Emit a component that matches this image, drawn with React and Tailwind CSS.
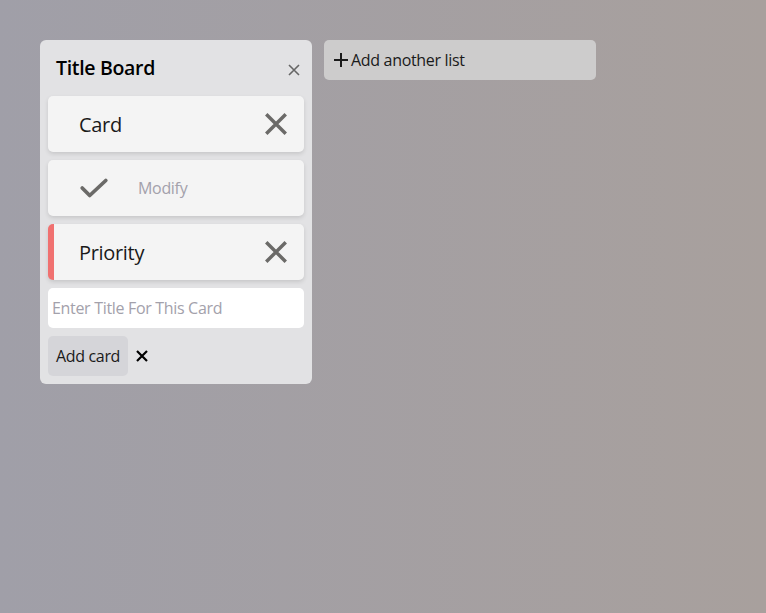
import React from "react";

const XIcon = ({ className }) => (
  <svg viewBox="0 0 24 24" className={className} fill="none" stroke="currentColor" strokeWidth="3.2" strokeLinecap="butt">
    <path d="M3 3L21 21M21 3L3 21" />
  </svg>
);

const CheckIcon = ({ className }) => (
  <svg viewBox="0 0 28 22" className={className} fill="none" stroke="currentColor" strokeWidth="3.5" strokeLinecap="round" strokeLinejoin="round">
    <path d="M3 11L10 18L25 4" />
  </svg>
);

export default function App() {
  return (
    <div
      className="w-[766px] h-[613px] bg-gradient-to-r from-[#a09fa8] to-[#a8a09d] flex items-start gap-3 p-10 tracking-[-0.02em]"
      style={{ fontFamily: '"Open Sans", "Noto Sans", sans-serif' }}
    >
      <div className="w-[272px] bg-[#e2e2e4] rounded-[6px] px-2 pb-2 flex flex-col">
        <div className="h-[56px] flex items-center justify-between pl-2 pr-1">
          <span className="text-[19.5px] font-semibold text-black leading-none">Title Board</span>
          <svg viewBox="0 0 12 12" className="w-[12px] h-[12px] text-[#666] mt-1" fill="none" stroke="currentColor" strokeWidth="1.6">
            <path d="M1 1L11 11M11 1L1 11" />
          </svg>
        </div>
        <div className="flex flex-col gap-2">
          <div className="h-[56px] bg-[#f4f4f4] rounded-[5px] shadow-[0_2px_4px_rgba(0,0,0,0.12)] flex items-center justify-between pl-[31px] pr-[15px]">
            <span className="text-[20px] text-[#1a1a1a] mt-[2px]">Card</span>
            <XIcon className="w-[26px] h-[26px] text-[#6b6a68]" />
          </div>
          <div className="h-[56px] bg-[#f4f4f4] rounded-[5px] shadow-[0_2px_4px_rgba(0,0,0,0.12)] flex items-center pl-[31px]">
            <CheckIcon className="w-[30px] h-[24px] text-[#6b6a68]" />
            <span className="ml-[29px] text-[16px] text-[#a3a1ab]">Modify</span>
          </div>
          <div className="h-[56px] bg-[#f4f4f4] rounded-[5px] shadow-[0_2px_4px_rgba(0,0,0,0.12)] flex items-center justify-between border-l-[6px] border-[#f07170] pl-[25px] pr-[15px]">
            <span className="text-[20px] text-[#1a1a1a] mt-[2px]">Priority</span>
            <XIcon className="w-[26px] h-[26px] text-[#6b6a68]" />
          </div>
          <input
            placeholder="Enter Title For This Card"
            className="h-[40px] bg-white rounded-[5px] px-1 text-[16px] placeholder-[#a3a1ab] outline-none tracking-[-0.02em]"
          />
          <div className="flex items-center gap-2">
            <button className="h-[40px] w-[80px] bg-[#d5d5d9] rounded-[5px] text-[16px] text-[#1a1a1a] tracking-[-0.02em]">Add card</button>
            <svg viewBox="0 0 12 12" className="w-[12px] h-[12px] text-black" fill="none" stroke="currentColor" strokeWidth="2.2">
              <path d="M1 1L11 11M11 1L1 11" />
            </svg>
          </div>
        </div>
      </div>
      <div className="w-[272px] h-[40px] bg-[#cdcccc] rounded-[5px] flex items-center pl-[10px] text-[16px] text-[#1a1a1a]">
        <svg viewBox="0 0 14 14" className="w-[14px] h-[14px] mr-[3px]" fill="none" stroke="currentColor" strokeWidth="2">
          <path d="M7 0V14M0 7H14" />
        </svg>
        Add another list
      </div>
    </div>
  );
}
